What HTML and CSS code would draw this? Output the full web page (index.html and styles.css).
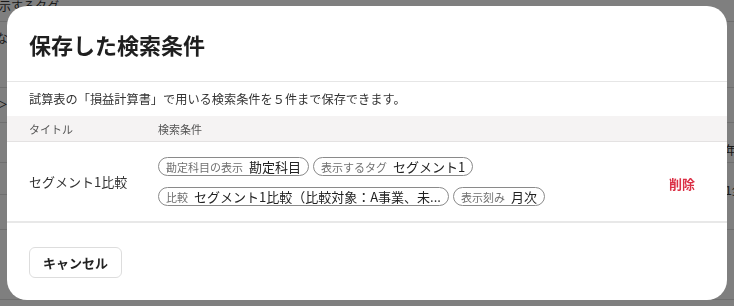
FILE: index.html
```html
<!doctype html>
<html>
<head>
    <meta charset="utf-8">
    <meta content="width=device-width,initial-scale=1" name="viewport">
    <title>保存した検索条件</title>
    <link rel="stylesheet" href="styles.css">
</head>
<body>
<div class="page">
    <div class="pg-row h22"><span class="pg-left">表示するタグ</span></div>
    <div class="pg-row h66"><span class="pg-left pad">な</span></div>
    <div class="pg-row h35"><span class="pg-left pad">＞</span></div>
    <div class="pg-row h40"><span class="pg-right">年度</span></div>
    <div class="pg-row h32"><span class="pg-right">1全</span></div>
    <div class="pg-row h35"></div>
    <div class="pg-row h70"></div>
    <div class="pg-foot">
        <span>ログ</span><span>セグメント</span><span>セグメント</span><span>セグメント</span>
    </div>
</div>

<div class="overlay">
    <div class="modal">
        <div class="modal-head">
            <h1>保存した検索条件</h1>
        </div>
        <p class="lead">試算表の「損益計算書」で用いる検索条件を５件まで保存できます。</p>
        <div class="thead">
            <div class="c-title">タイトル</div>
            <div class="c-cond">検索条件</div>
        </div>
        <div class="trow">
            <div class="c-title name">セグメント1比較</div>
            <div class="c-cond">
                <div class="chips">
                    <span class="chip"><span class="chip-label">勘定科目の表示</span><span class="chip-value">勘定科目</span></span>
                    <span class="chip"><span class="chip-label">表示するタグ</span><span class="chip-value">セグメント1</span></span>
                </div>
                <div class="chips">
                    <span class="chip" title="セグメント1比較（比較対象：A事業、未設定、B事業）"><span class="chip-label">比較</span><span class="chip-value">セグメント1比較（比較対象：A事業、未...</span></span>
                    <span class="chip"><span class="chip-label">表示刻み</span><span class="chip-value">月次</span></span>
                </div>
            </div>
            <div class="c-act"><a class="del" href="#">削除</a></div>
        </div>
        <div class="modal-foot">
            <button class="btn" type="button">キャンセル</button>
        </div>
    </div>
</div>
</body>
</html>
```

FILE: styles.css
```css
body {
    margin: 0;
    font-family: "Noto Sans CJK JP", "Noto Sans", sans-serif;
    background: #ffffff;
    color: #222222;
    overflow: hidden;
}

/* page behind the dialog */
.page {
    width: 734px;
    height: 306px;
    font-size: 12px;
    color: #333333;
}

.pg-row {
    display: flex;
    justify-content: space-between;
    border-bottom: 1px solid #dedede;
    box-sizing: border-box;
}

.h22 { height: 22px; }
.h66 { height: 66px; }
.h35 { height: 35px; }
.h40 { height: 40px; }
.h32 { height: 32px; }
.h70 { height: 70px; }

.pg-left {
    margin-left: -13px;
    line-height: 12px;
}

.pg-left.pad {
    margin-left: -4px;
    padding-top: 10px;
}

.pg-right {
    margin-left: 725px;
    padding-top: 18px;
    white-space: nowrap;
}

.pg-foot {
    display: flex;
    gap: 120px;
    padding: 3px 0 0 75px;
    font-size: 12px;
}

/* dialog */
.overlay {
    position: fixed;
    inset: 0;
    background: rgba(0, 0, 0, 0.5);
    padding: 6px 7px;
}

.modal {
    width: 720px;
    height: 294px;
    background: #ffffff;
    border-radius: 20px;
    overflow: hidden;
    display: flex;
    flex-direction: column;
}

.modal-head {
    flex: none;
    height: 75px;
    border-bottom: 1px solid #e6e6e6;
    padding: 0 22px;
    display: flex;
    align-items: center;
}

.modal-head h1 {
    margin: 0;
    font-size: 22px;
    font-weight: bold;
    color: #1f1f1f;
}

.lead {
    flex: none;
    margin: 0;
    height: 34px;
    padding: 0 22px;
    font-size: 12.2px;
    line-height: 34px;
    color: #333333;
}

.thead {
    flex: none;
    display: flex;
    height: 25px;
    align-items: center;
    background: #f5f3f3;
    border-bottom: 1px solid #e4e2e2;
    font-size: 11px;
    color: #555555;
}

.c-title {
    width: 129px;
    padding-left: 22px;
    flex: none;
}

.c-cond {
    flex: 1;
    display: flex;
    flex-direction: column;
    gap: 11px;
}

.trow {
    flex: none;
    display: flex;
    align-items: center;
    height: 79px;
}

.name {
    font-size: 13px;
    color: #333333;
}

.chips {
    display: flex;
    gap: 4px;
}

.chip {
    display: inline-flex;
    align-items: center;
    gap: 6px;
    height: 19px;
    box-sizing: border-box;
    border: 1px solid #8a8a8a;
    border-radius: 10px;
    padding: 0 7px;
    white-space: nowrap;
}

.chip-label {
    font-size: 11px;
    color: #707070;
}

.chip-value {
    font-size: 13px;
    color: #222222;
}

.c-act {
    padding-right: 32px;
    padding-left: 10px;
}

.del {
    font-size: 13px;
    font-weight: 600;
    color: #db2f45;
    text-decoration: none;
}

.modal-foot {
    flex: none;
    border-top: 2px solid #e8e8e8;
    padding: 24px 22px 22px;
}

.btn {
    display: block;
    width: 93px;
    height: 31px;
    background: #ffffff;
    border: 1px solid #dddddd;
    border-radius: 6px;
    font-family: inherit;
    font-size: 13px;
    font-weight: bold;
    color: #222222;
}
```
